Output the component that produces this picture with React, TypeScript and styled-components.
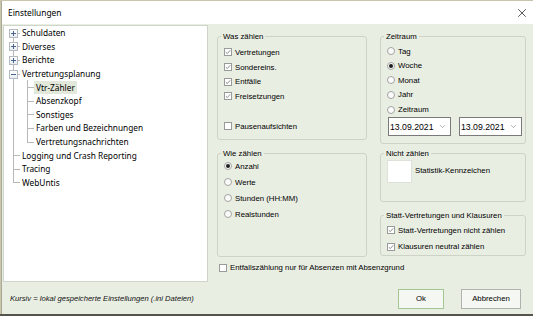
import React from 'react';
import styled, { createGlobalStyle } from 'styled-components';
import { X, ChevronDown } from 'lucide-react';

const GlobalStyle = createGlobalStyle`
  html, body {
    margin: 0;
    padding: 0;
  }
  body {
    width: 533px;
    height: 316px;
    overflow: hidden;
    background: #c9c6ad;
    font-family: "Liberation Sans", Arial, sans-serif;
    color: #000;
  }
`;

const Dialog = styled.div`
  width: 532px;
  height: 313px;
  margin: 1px 0 0 1px;
  display: flex;
  flex-direction: column;
  background: #e9eee3;
  box-sizing: border-box;
  border-left: 1px solid #a9a995;
`;

const BottomEdge = styled.div`
  height: 2px;
  background: #55554d;
`;

const TitleBar = styled.div`
  height: 23px;
  flex: none;
  display: flex;
  align-items: center;
  justify-content: space-between;
  padding: 0 4px 0 6px;
  background: #ffffff;
  font-family: "Noto Sans", sans-serif;
  font-size: 8.4px;
  color: #000;
`;

const Body = styled.div`
  flex: 1;
  display: flex;
  min-height: 0;
`;

const Tree = styled.div`
  width: 205px;
  margin: 1px 0 1px 1px;
  box-sizing: border-box;
  background: #ffffff;
  border: 1px solid #d0d5cb;
  padding: 0 0 0 2px;
  font-family: "Noto Sans", sans-serif;
  font-size: 8.3px;
  color: #000;
`;

const TreeRow = styled.div`
  height: 13.6px;
  display: flex;
  align-items: center;
  white-space: nowrap;
`;

const Guide = styled.span<{ $up: boolean; $down: boolean; $stub: boolean }>`
  position: relative;
  flex: none;
  width: 14px;
  align-self: stretch;
  &::before {
    content: '';
    display: ${p => (p.$up || p.$down ? 'block' : 'none')};
    position: absolute;
    left: 7px;
    top: ${p => (p.$up ? '0' : '50%')};
    bottom: ${p => (p.$down ? '0' : '50%')};
    border-left: 1px solid #b8b8b8;
  }
  &::after {
    content: '';
    display: ${p => (p.$stub ? 'block' : 'none')};
    position: absolute;
    left: 7px;
    right: 0;
    top: 50%;
    border-top: 1px solid #b8b8b8;
  }
`;

const Expander = styled.span<{ $open: boolean }>`
  position: absolute;
  z-index: 1;
  left: 3px;
  top: calc(50% - 4px);
  width: 9px;
  height: 9px;
  box-sizing: border-box;
  border: 1px solid #b3bac2;
  background: linear-gradient(#ffffff, #e9ecf0);
  &::before {
    content: '';
    position: absolute;
    left: 1px;
    width: 5px;
    top: 3px;
    height: 1px;
    background: #4a6490;
  }
  &::after {
    content: '';
    display: ${p => (p.$open ? 'none' : 'block')};
    position: absolute;
    left: 3px;
    width: 1px;
    top: 1px;
    height: 5px;
    background: #4a6490;
  }
`;

const TreeLabel = styled.span<{ $selected?: boolean }>`
  padding: 1px 2px;
  background: ${p => (p.$selected ? '#e2e8da' : 'transparent')};
`;

const RightPane = styled.div`
  flex: 1;
  display: flex;
  gap: 13px;
  padding: 8px 0 0 9px;
  font-size: 7.8px;
`;

const Column = styled.div<{ $w: number }>`
  width: ${p => p.$w}px;
  display: flex;
  flex-direction: column;
`;

const Group = styled.fieldset<{ $h: number; $mt?: number }>`
  margin: ${p => p.$mt ?? 0}px 0 0 0;
  padding: 0;
  height: ${p => p.$h}px;
  box-sizing: border-box;
  border: 1px solid #cdd3c7;
  border-radius: 3px;
  min-width: 0;
`;

const Legend = styled.legend`
  padding: 0 2px;
  margin-left: 3px;
  font-size: 7.8px;
  line-height: 9px;
`;

const GroupContent = styled.div<{ $pt: number }>`
  padding: ${p => p.$pt}px 0 0 6px;
`;

const OptionRow = styled.div<{ $h: number; $mt?: number; $ml?: number }>`
  display: flex;
  align-items: center;
  gap: 3px;
  height: ${p => p.$h}px;
  margin-top: ${p => p.$mt ?? 0}px;
  margin-left: ${p => p.$ml ?? 0}px;
  white-space: nowrap;
`;

const Box = styled.span`
  width: 8px;
  height: 8px;
  flex: none;
  box-sizing: border-box;
  border: 1px solid #999a9a;
  background: #ffffff;
  display: flex;
  align-items: center;
  justify-content: center;
`;

const Radio = styled.span<{ $on?: boolean }>`
  width: 8px;
  height: 8px;
  flex: none;
  box-sizing: border-box;
  border: 1px solid #a2a2a2;
  border-radius: 50%;
  background: #fbfbfb;
  display: flex;
  align-items: center;
  justify-content: center;
  &::after {
    content: '';
    display: ${p => (p.$on ? 'block' : 'none')};
    width: 4px;
    height: 4px;
    border-radius: 50%;
    background: #1e1e1e;
  }
`;

const DateRow = styled.div`
  display: flex;
  gap: 8px;
  margin: 0.6px 0 0 1px;
`;

const Combo = styled.div`
  width: 63px;
  height: 19px;
  box-sizing: border-box;
  border: 1px solid #7a7a7a;
  background: #ffffff;
  display: flex;
  align-items: center;
  justify-content: space-between;
  padding: 0 3px 0 1px;
  font-size: 8.7px;
  color: #000;
`;

const Swatch = styled.span`
  width: 25px;
  height: 23px;
  flex: none;
  box-sizing: border-box;
  border: 1px solid #dde1d9;
  background: #ffffff;
`;

const SwatchRow = styled.div`
  display: flex;
  align-items: flex-start;
  gap: 3px;
  padding-top: 1.5px;
`;

const SwatchLabel = styled.span`
  margin-top: 6px;
`;

const Footer = styled.div`
  height: 31px;
  flex: none;
  box-sizing: border-box;
  display: flex;
  align-items: center;
  justify-content: space-between;
  padding: 0 12px 0 8px;
`;

const Note = styled.span`
  font-style: italic;
  font-size: 7.6px;
  color: #111;
`;

const Buttons = styled.div`
  display: flex;
  gap: 17px;
`;

const Button = styled.button<{ $w: number; $default?: boolean }>`
  width: ${p => p.$w}px;
  height: 20px;
  box-sizing: border-box;
  border: 1px solid ${p => (p.$default ? '#a3c693' : '#b0b3ad')};
  background: #f5f7f2;
  font-family: "Liberation Sans", Arial, sans-serif;
  font-size: 7.8px;
  color: #000;
  padding: 0;
`;

const Check = ({ on }: { on?: boolean }) => (
  <Box>
    {on && (
      <svg width="6" height="6" viewBox="0 0 6 6">
        <polyline points="0.8,3.2 2.3,4.6 5.2,1.3" fill="none" stroke="#808080" strokeWidth="0.9" />
      </svg>
    )}
  </Box>
);

type Item = {
  label: string;
  level: 0 | 1;
  expander?: 'plus' | 'minus';
  up: boolean;
  down: boolean;
  selected?: boolean;
};

const tree: Item[] = [
  { label: 'Schuldaten', level: 0, expander: 'plus', up: false, down: true },
  { label: 'Diverses', level: 0, expander: 'plus', up: true, down: true },
  { label: 'Berichte', level: 0, expander: 'plus', up: true, down: true },
  { label: 'Vertretungsplanung', level: 0, expander: 'minus', up: true, down: true },
  { label: 'Vtr-Zähler', level: 1, up: true, down: true, selected: true },
  { label: 'Absenzkopf', level: 1, up: true, down: true },
  { label: 'Sonstiges', level: 1, up: true, down: true },
  { label: 'Farben und Bezeichnungen', level: 1, up: true, down: true },
  { label: 'Vertretungsnachrichten', level: 1, up: true, down: false },
  { label: 'Logging und Crash Reporting', level: 0, up: true, down: true },
  { label: 'Tracing', level: 0, up: true, down: true },
  { label: 'WebUntis', level: 0, up: true, down: false },
];

const App = () => {
  return (
    <>
      <GlobalStyle />
      <Dialog>
        <TitleBar>
          <span>Einstellungen</span>
          <X size={14} strokeWidth={1.3} color="#222" />
        </TitleBar>
        <Body>
          <Tree>
            {tree.map(item => (
              <TreeRow key={item.label}>
                {item.level === 0 ? (
                  <Guide $up={item.up} $down={item.down} $stub>
                    {item.expander && <Expander $open={item.expander === 'minus'} />}
                  </Guide>
                ) : (
                  <>
                    <Guide $up $down $stub={false} />
                    <Guide $up={item.up} $down={item.down} $stub />
                  </>
                )}
                <TreeLabel $selected={item.selected}>{item.label}</TreeLabel>
              </TreeRow>
            ))}
          </Tree>
          <RightPane>
            <Column $w={150}>
              <Group $h={107.5}>
                <Legend>Was zählen</Legend>
                <GroupContent $pt={4.2}>
                  <OptionRow $h={14.6}><Check on />Vertretungen</OptionRow>
                  <OptionRow $h={14.6}><Check on />Sondereins.</OptionRow>
                  <OptionRow $h={14.6}><Check on />Entfälle</OptionRow>
                  <OptionRow $h={14.6}><Check on />Freisetzungen</OptionRow>
                  <OptionRow $h={14.6} $mt={15.6}><Check />Pausenaufsichten</OptionRow>
                </GroupContent>
              </Group>
              <Group $h={107.5} $mt={9.5}>
                <Legend>Wie zählen</Legend>
                <GroupContent $pt={0.2}>
                  <OptionRow $h={16}><Radio $on />Anzahl</OptionRow>
                  <OptionRow $h={16}><Radio />Werte</OptionRow>
                  <OptionRow $h={16}><Radio />Stunden (HH:MM)</OptionRow>
                  <OptionRow $h={16}><Radio />Realstunden</OptionRow>
                </GroupContent>
              </Group>
              <OptionRow $h={14} $mt={4} $ml={2}>
                <Check />Entfallszählung nur für Absenzen mit Absenzgrund
              </OptionRow>
            </Column>
            <Column $w={146}>
              <Group $h={111.5}>
                <Legend>Zeitraum</Legend>
                <GroupContent $pt={2.9}>
                  <OptionRow $h={14.6}><Radio />Tag</OptionRow>
                  <OptionRow $h={14.6}><Radio $on />Woche</OptionRow>
                  <OptionRow $h={14.6}><Radio />Monat</OptionRow>
                  <OptionRow $h={14.6}><Radio />Jahr</OptionRow>
                  <OptionRow $h={14.6}><Radio />Zeitraum</OptionRow>
                  <DateRow>
                    <Combo>13.09.2021<ChevronDown size={9} strokeWidth={1.3} color="#666" /></Combo>
                    <Combo>13.09.2021<ChevronDown size={9} strokeWidth={1.3} color="#666" /></Combo>
                  </DateRow>
                </GroupContent>
              </Group>
              <Group $h={52.5} $mt={5.5}>
                <Legend>Nicht zählen</Legend>
                <GroupContent $pt={0}>
                  <SwatchRow>
                    <Swatch />
                    <SwatchLabel>Statistik-Kennzeichen</SwatchLabel>
                  </SwatchRow>
                </GroupContent>
              </Group>
              <Group $h={44.5} $mt={9.5}>
                <Legend>Statt-Vertretungen und Klausuren</Legend>
                <GroupContent $pt={2}>
                  <OptionRow $h={16.6}><Check on />Statt-Vertretungen nicht zählen</OptionRow>
                  <OptionRow $h={16.6}><Check on />Klausuren neutral zählen</OptionRow>
                </GroupContent>
              </Group>
            </Column>
          </RightPane>
        </Body>
        <Footer>
          <Note>Kursiv = lokal gespeicherte Einstellungen (.ini Dateien)</Note>
          <Buttons>
            <Button $w={46} $default>Ok</Button>
            <Button $w={60}>Abbrechen</Button>
          </Buttons>
        </Footer>
      </Dialog>
      <BottomEdge />
    </>
  );
};

export default App;
